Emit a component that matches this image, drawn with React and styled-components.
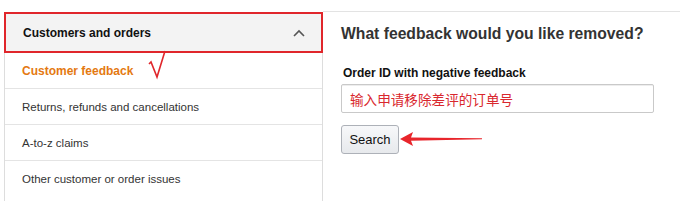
import React from 'react'
import styled, { createGlobalStyle } from 'styled-components'

const GlobalStyle = createGlobalStyle`
  html, body {
    margin: 0;
    padding: 0;
    background: #fff;
  }
  body {
    font-family: Arial, "Liberation Sans", "Noto Sans CJK SC", sans-serif;
    color: #111;
  }
`

const Page = styled.div`
  display: flex;
  width: 680px;
  height: 201px;
  overflow: hidden;
`

const Sidebar = styled.nav`
  width: 317px;
  margin: 12px 0 0 4px;
  border-left: 1px solid #ddd;
  border-right: 1px solid #ddd;
  display: flex;
  flex-direction: column;
`

const Header = styled.div`
  height: 37px;
  margin: 0 -1px;
  display: flex;
  align-items: center;
  justify-content: space-between;
  padding: 0 16px 0 17px;
  background: #f3f3f3;
  border: 2px solid #e0262b;
  font-size: 12px;
  font-weight: bold;
  color: #111;
`

const Chevron = styled.svg`
  width: 12px;
  height: 8px;
`

const Row = styled.div`
  position: relative;
  height: 35px;
  flex-shrink: 0;
  display: flex;
  align-items: center;
  padding-left: 17px;
  border-bottom: 1px solid #e4e4e4;
  font-size: ${p => (p.$active ? '12px' : '11.5px')};
  font-weight: ${p => (p.$active ? 'bold' : 'normal')};
  color: ${p => (p.$active ? '#e47911' : '#333')};
  &:last-child {
    border-bottom: none;
  }
`

const Tick = styled.svg`
  position: absolute;
  left: 141px;
  top: -3px;
  width: 22px;
  height: 30px;
  overflow: visible;
`

const Main = styled.main`
  flex: 1;
  margin-top: 11px;
  border-top: 1px solid #e3e3e3;
  padding: 13px 0 0 18px;
`

const Title = styled.h2`
  margin: 0 0 23px 0;
  font-size: 15.7px;
  font-weight: bold;
  color: #333;
`

const Label = styled.label`
  display: block;
  margin: 0 0 4px 2px;
  font-size: 12px;
  font-weight: bold;
  color: #111;
`

const Field = styled.div`
  box-sizing: border-box;
  width: 313px;
  height: 29px;
  border: 1px solid #c9c9c9;
  border-radius: 2px;
  box-shadow: inset 0 1px 0 rgba(0, 0, 0, 0.07);
  display: flex;
  align-items: center;
  padding-left: 8px;
  font-size: 13.6px;
  color: #d9272e;
`

const ButtonRow = styled.div`
  position: relative;
  margin-top: 12px;
`

const Button = styled.button`
  width: 58px;
  height: 29px;
  border: 1px solid #adb1b8;
  border-radius: 3px;
  background: linear-gradient(#f7f8fa, #e7e9ec);
  font-family: Arial, "Liberation Sans", sans-serif;
  font-size: 13px;
  color: #111;
  padding: 0;
`

const Arrow = styled.svg`
  position: absolute;
  left: 59px;
  top: 7px;
  width: 82px;
  height: 14px;
`

export default function App() {
  return (
    <>
      <GlobalStyle />
      <Page>
        <Sidebar>
          <Header>
            Customers and orders
            <Chevron viewBox="0 0 12 8">
              <polyline points="1,7 6,2 11,7" fill="none" stroke="#555" strokeWidth="1.6" />
            </Chevron>
          </Header>
          <Row $active>
            Customer feedback
            <Tick viewBox="0 0 22 30">
              <polyline points="3,14 5,12 11,27 19,1" fill="none" stroke="#e0262b" strokeWidth="1.6" strokeLinejoin="miter" />
            </Tick>
          </Row>
          <Row>Returns, refunds and cancellations</Row>
          <Row>A-to-z claims</Row>
          <Row>Other customer or order issues</Row>
        </Sidebar>
        <Main>
          <Title>What feedback would you like removed?</Title>
          <Label>Order ID with negative feedback</Label>
          <Field>输入申请移除差评的订单号</Field>
          <ButtonRow>
            <Button>Search</Button>
            <Arrow viewBox="0 0 82 14">
              <polygon points="0,7 13,0 11,5.5 82,6.3 82,7.3 11,8.8 13,14" fill="#e8252b" />
            </Arrow>
          </ButtonRow>
        </Main>
      </Page>
    </>
  )
}
